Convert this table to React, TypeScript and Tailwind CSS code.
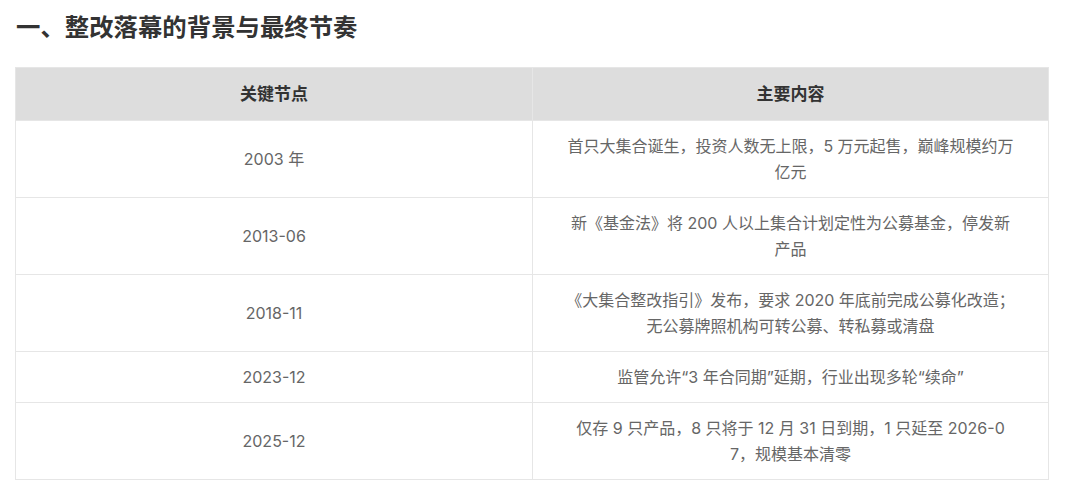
import React from 'react';

const rows: { date: string; lines: string[] }[] = [
  { date: '2003 年', lines: ['首只大集合诞生，投资人数无上限，5 万元起售，巅峰规模约万', '亿元'] },
  { date: '2013-06', lines: ['新《基金法》将 200 人以上集合计划定性为公募基金，停发新', '产品'] },
  { date: '2018-11', lines: ['《大集合整改指引》发布，要求 2020 年底前完成公募化改造；', '无公募牌照机构可转公募、转私募或清盘'] },
  { date: '2023-12', lines: ['监管允许“3 年合同期”延期，行业出现多轮“续命”'] },
  { date: '2025-12', lines: ['仅存 9 只产品，8 只将于 12 月 31 日到期，1 只延至 2026-0', '7，规模基本清零'] },
];

export default function App() {
  return (
    <div className="min-h-[499px] w-[1080px] bg-white pt-[9px] font-['Inter','Noto_Sans_CJK_SC',sans-serif]">
      <h2 className="pl-[16px] text-[24.4px] font-bold leading-[36px] text-[#333]">
        一、整改落幕的背景与最终节奏
      </h2>

      <table className="ml-[15px] mt-[22px] w-[1034px] table-fixed border-collapse">
        <thead>
          <tr className="bg-[#dddddd]">
            <th className="w-[517px] border border-[#e6e6e6] py-[13px] text-center text-[17px] font-bold leading-[26px] text-[#333]">
              关键节点
            </th>
            <th className="border border-[#e6e6e6] py-[13px] text-center text-[17px] font-bold leading-[26px] text-[#333]">
              主要内容
            </th>
          </tr>
        </thead>
        <tbody>
          {rows.map((row, i) => (
            <tr key={i}>
              <td className="border border-[#e6e6e6] py-[12px] text-center text-[16px] leading-[26px] text-[#666]">
                {row.date}
              </td>
              <td className="whitespace-nowrap border border-[#e6e6e6] py-[12px] text-center text-[16px] leading-[26px] text-[#666]">
                {row.lines.map((l, j) => (
                  <div key={j}>{l}</div>
                ))}
              </td>
            </tr>
          ))}
        </tbody>
      </table>
    </div>
  );
}
